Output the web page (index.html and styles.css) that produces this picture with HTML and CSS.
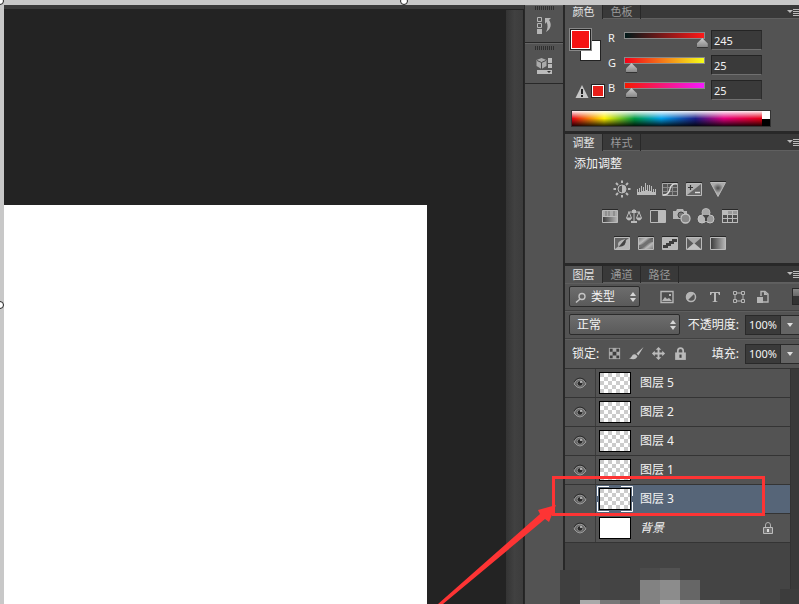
FILE: index.html
```html
<!DOCTYPE html>
<html lang="zh-CN">
<head>
<meta charset="utf-8">
<title>图层</title>
<link rel="stylesheet" href="styles.css">
</head>
<body>
<svg class="defs" aria-hidden="true">
  <defs>
    <linearGradient id="fade" x1="0" x2="1" y1="0" y2="0"><stop offset="0" stop-color="#3a3a3a"/><stop offset="1" stop-color="#b8b8b8"/></linearGradient>
    <linearGradient id="diag" x1="0" x2="1" y1="0" y2="1"><stop offset="0" stop-color="#777"/><stop offset=".3" stop-color="#bbb"/><stop offset=".5" stop-color="#555"/><stop offset=".7" stop-color="#bbb"/><stop offset="1" stop-color="#777"/></linearGradient>
    <radialGradient id="vibe" cx=".5" cy=".4" r=".5"><stop offset="0" stop-color="#4c4c4c"/><stop offset=".7" stop-color="#aaa"/></radialGradient>
    <symbol id="eye" viewBox="0 0 14 12"><path d="M1 7Q3 2 7 2t6 5Q10 11 7 11T1 7z" fill="#666" stroke="#999"/><path d="M1 5Q3 1 7 1t6 4" fill="none" stroke="#2c2c2c"/><circle cx="7" cy="6.500" r="2.800" fill="#292929" stroke="#858585"/><circle cx="8" cy="5" r="1" fill="#ccc"/></symbol>
    <symbol id="updown" viewBox="0 0 6 10"><path d="M0 4L3 0l3 4zM0 6h6l-3 4z" fill="#d6d6d6"/></symbol>
    <symbol id="down" viewBox="0 0 6 4"><path d="M0 0h6L3 4z" fill="#ddd"/></symbol>
    <symbol id="menu" viewBox="0 0 13 9"><path d="M1 2h6L4 5z" fill="#bbb"/><path d="M7 1.500h6M7 3.500h6M7 5.500h6M7 7.500h6" stroke="#bbb"/></symbol>
    <symbol id="lock" viewBox="0 0 12 14"><path d="M3.500 7V4.500a2.500 2.500 0 0 1 5 0V7" fill="none" stroke="#b9b9b9" stroke-width="1.6"/><path d="M1 6h10v7H1z" fill="#b9b9b9"/><path d="M5 8h2v3H5z" fill="#444"/></symbol>
    <symbol id="lock-outline" viewBox="0 0 12 14"><path d="M3.500 6V4a2.500 2.500 0 0 1 5 0v2" fill="none" stroke="#b0b0b0"/><path d="M1.500 6.500h9v6h-9z" fill="#707070" stroke="#bcbcbc"/><path d="M5 8h2v3H5z" fill="#ddd"/></symbol>
  </defs>
</svg>

<main class="app">
  <section class="workspace" aria-label="画布">
    <div class="canvas"><div class="paper"></div></div>
    <div class="scrollbar"></div>
  </section>

  <nav class="dock" aria-label="面板图标">
    <div class="dock-group">
      <span class="grip"></span>
      <button aria-label="历史记录"><svg width="16" height="20" viewBox="0 0 16 20"><path d="M1.500 1.500h4v4h-4zM1.500 7.500h4v4h-4z" fill="none" stroke="#b5b5b5"/><path d="M1 13h5v5H1z" fill="#b5b5b5"/><path d="M9 2h6l-2 2c3 4 2 9-3 12 2-4 2-7 .5-10L9 8z" fill="#b5b5b5"/></svg></button>
    </div>
    <div class="dock-group">
      <span class="grip"></span>
      <button aria-label="属性"><svg width="16" height="20" viewBox="0 0 16 20"><path d="M5.500 2l5 2v6l-5 3-5-3V4z" fill="#aaa"/><path d="M1 4.500l4.500 2 4.500-2M5.500 6.500V13" fill="none" stroke="#4a4a4a"/><path d="M12 2h4v5h-4zM12 8h4v4h-4zM1 14h15v4H1z" fill="#bbb"/><path d="M11 15h4l-2 2z" fill="#333"/></svg></button>
    </div>
  </nav>

  <aside class="panels">
    <section class="panel color-panel">
      <div class="tabs tabs-cut" role="tablist">
        <button class="tab active" role="tab">颜色</button><button class="tab" role="tab">色板</button>
        <button class="panel-menu" aria-label="颜色面板菜单"><svg width="13" height="9"><use href="#menu"/></svg></button>
      </div>
      <div class="color-body">
        <div class="swatches">
          <div class="pair"><span class="swatch back"></span><span class="swatch front"></span></div>
          <div class="gamut"><svg width="14" height="13" viewBox="0 0 14 13"><path d="M7 0l6.500 13H.5z" fill="#c6c6c6"/><path d="M6 4h2v5H6zM6 10h2v2H6z" fill="#222"/></svg><span class="gamut-chip"></span></div>
        </div>
        <div class="channels">
          <div class="channel"><label for="r">R</label><input class="slider red" type="range" min="0" max="255" value="245" aria-label="R 滑块"><input class="number" id="r" type="text" value="245"></div>
          <div class="channel"><label for="g">G</label><input class="slider green" type="range" min="0" max="255" value="25" aria-label="G 滑块"><input class="number" id="g" type="text" value="25"></div>
          <div class="channel"><label for="b">B</label><input class="slider blue" type="range" min="0" max="255" value="25" aria-label="B 滑块"><input class="number" id="b" type="text" value="25"></div>
        </div>
      </div>
      <div class="spectrum"><span class="hues"></span><span class="mono"></span></div>
    </section>

    <section class="panel adjust-panel">
      <div class="tabs" role="tablist">
        <button class="tab active" role="tab">调整</button><button class="tab" role="tab">样式</button>
        <button class="panel-menu" aria-label="调整面板菜单"><svg width="13" height="9"><use href="#menu"/></svg></button>
      </div>
      <h2>添加调整</h2>
      <div class="tools">
        <div class="tool-row">
          <button aria-label="亮度/对比度"><svg viewBox="0 0 16 16"><circle cx="8" cy="8" r="4" fill="#555" stroke="#bbb"/><path d="M8 4a4 4 0 0 1 0 8z" fill="#bbb"/><path d="M8-.5V2M8 14v2.500M-.5 8H2M14 8h2.500M2 2l2 2M12 12l2 2M14 2l-2 2M2 14l2-2" stroke="#bbb" stroke-width="2"/></svg></button>
          <button aria-label="色阶"><svg viewBox="0 0 16 16"><path d="M-1 14V8h1v3h1V7h1v4h1V5h1v5h1V6h1v4h1V2h1v7h1V4h1v6h1V4h1v6h1V5h1v6h1V8h1v3h1V8h1v6z" fill="#bbb"/></svg></button>
          <button aria-label="曲线"><svg viewBox="0 0 16 16"><path d="M.5 2.500h15v12H.5z" fill="#555" stroke="#aaa"/><path d="M5.500 3v11M10.500 3v11M1 6.500h14M1 10.500h14" stroke="#898989"/><path d="M1 14q6 0 7-6t7-5" fill="none" stroke="#ddd" stroke-width="1.4"/><path d="M0 1.500h16" stroke="#292929"/></svg></button>
          <button aria-label="曝光度"><svg viewBox="0 0 16 16"><path d="M.5 2.500h15v12H.5z" fill="#666" stroke="#bbb"/><path d="M1 3h14L1 14z" fill="#b0b0b0"/><path d="M2 6.500h5M4.500 4v5" stroke="#333" stroke-width="1.2"/><path d="M9 11.500h5" stroke="#ddd" stroke-width="1.4"/><path d="M0 1.500h16" stroke="#262626"/></svg></button>
          <button aria-label="自然饱和度"><svg viewBox="0 0 16 16"><path d="M.5 1.500h15L8 15.500z" fill="url(#vibe)" stroke="#bbb"/><path d="M0 .5h16" stroke="#292929"/></svg></button>
        </div>
        <div class="tool-row">
          <button aria-label="色相/饱和度"><svg viewBox="0 0 16 16"><path d="M.5 2.500h15v12H.5z" fill="url(#fade)" stroke="#bbb"/><path d="M1 3h14v5H1z" fill="#aaa"/><path d="M4 3v5M7 3v5M12 3v5" stroke="#777" stroke-width="1"/><path d="M0 8.500h16" stroke="#bbb"/><path d="M0 1.500h16" stroke="#292929"/></svg></button>
          <button aria-label="色彩平衡"><svg viewBox="0 0 16 16"><path d="M8 1v13M2 4h12M3 4L.5 10h5L3 4zM13 4l-2.500 6h5L13 4z" fill="none" stroke="#bbb"/><path d="M0 10h6q-3 5-6 0zM10 10h6q-3 5-6 0zM5 13h6v2H5zM6 2h4v3H6z" fill="#bbb"/></svg></button>
          <button aria-label="黑白"><svg viewBox="0 0 16 16"><path d="M.5 2.500h15v12H.5z" fill="#515151" stroke="#bbb"/><path d="M8 3h7v11H8z" fill="#bbb"/><path d="M0 1.500h16" stroke="#292929"/></svg></button>
          <button aria-label="照片滤镜"><svg viewBox="0 0 16 16"><path d="M-1 3h3l1-2h6l1 2h3v8H-1z" fill="#b5b5b5"/><circle cx="7" cy="7" r="3" fill="#777" stroke="#444"/><circle cx="11.500" cy="10.500" r="4.500" fill="#888" stroke="#c4c4c4" stroke-width="1.300"/></svg></button>
          <button aria-label="通道混合器"><svg viewBox="0 0 16 16"><circle cx="8" cy="4.500" r="4" fill="#a6a6a6" stroke="#b8b8b8"/><circle cx="4" cy="11" r="4" fill="#b6b6b6" stroke="#c4c4c4"/><circle cx="12" cy="11" r="4" fill="#999" stroke="#c4c4c4"/><path d="M4.500 7h7L9 10v3H7v-3z" fill="#444"/></svg></button>
          <button aria-label="颜色查找"><svg viewBox="0 0 16 16"><path d="M0 2h16v13H0z" fill="#bbb"/><path d="M6 3h4v3H6zM11 3h4v3h-4z" fill="#999"/><path d="M1 7h4v3H1zM6 7h4v3H6zM11 7h4v3h-4zM1 11h4v3H1zM6 11h4v3H6zM11 11h4v3h-4z" fill="#4e4e4e"/><path d="M0 1.500h16" stroke="#292929"/></svg></button>
        </div>
        <div class="tool-row">
          <button aria-label="反相"><svg viewBox="0 0 16 16"><path d="M.5 2.500h15v12H.5z" fill="#666" stroke="#bbb"/><path d="M1 14L15 3v11z" fill="#b5b5b5"/><path d="M4.500 12q-3-6 7-8z" fill="#b5b5b5"/><path d="M4.500 12L11.500 4q2 7-7 8z" fill="#444"/><path d="M0 1.500h16" stroke="#292929"/></svg></button>
          <button aria-label="色调分离"><svg viewBox="0 0 16 16"><path d="M.5 2.500h15v12H.5z" fill="url(#diag)" stroke="#bbb"/><path d="M1 10q5 0 8-4 3-2 6-2v3q-5 0-8 4-3 2-6 2z" fill="#707070"/><path d="M0 1.500h16" stroke="#292929"/></svg></button>
          <button aria-label="阈值"><svg viewBox="0 0 16 16"><path d="M.5 2.500h15v12H.5z" fill="#b8b8b8" stroke="#bbb"/><path d="M1 10h3V8h3V6h3V4h5v3h-3v2H9v2H6v2H1z" fill="#3d3d3d"/><path d="M0 1.500h16" stroke="#292929"/></svg></button>
          <button aria-label="可选颜色"><svg viewBox="0 0 16 16"><path d="M.5 2.500h15v12H.5z" fill="#5b5b5b" stroke="#bbb"/><path d="M1 3h14L8 9z" fill="#aaa"/><path d="M1 14h14L8 8z" fill="#c1c1c1"/><path d="M0 1.500h16" stroke="#292929"/></svg></button>
          <button aria-label="渐变映射"><svg viewBox="0 0 16 16"><path d="M.5 2.500h15v12H.5z" fill="url(#fade)" stroke="#bbb"/><path d="M0 1.500h16" stroke="#292929"/></svg></button>
        </div>
      </div>
    </section>

    <section class="panel layers-panel">
      <div class="tabs" role="tablist">
        <button class="tab active" role="tab">图层</button><button class="tab" role="tab">通道</button><button class="tab" role="tab">路径</button>
        <button class="panel-menu" aria-label="图层面板菜单"><svg width="13" height="9"><use href="#menu"/></svg></button>
      </div>
      <div class="bar">
        <div class="dropdown filter">
          <select aria-label="图层过滤"><option>类型</option></select>
          <svg class="search" width="12" height="12" viewBox="0 0 12 12"><circle cx="7" cy="4.500" r="3" fill="none" stroke="#c4c4c4" stroke-width="1.400"/><path d="M5 7l-4 3.500" stroke="#c4c4c4" stroke-width="1.500"/></svg>
          <svg class="arrows" width="6" height="10"><use href="#updown"/></svg>
        </div>
        <div class="filters">
          <button aria-label="像素图层"><svg viewBox="0 0 16 16"><path d="M2 2.500h12v11H2z" fill="#4c4c4c" stroke="#b5b5b5" stroke-width="1.400"/><path d="M3 12l3-4 2 2 2-1 3 3z" fill="#b5b5b5"/><path d="M10 5h2v2h-2z" fill="#b5b5b5"/></svg></button>
          <button aria-label="调整图层"><svg viewBox="0 0 16 16"><circle cx="8" cy="8" r="4.500" fill="#555" stroke="#b5b5b5" stroke-width="1.500"/><path d="M11.500 4.500l-7 7A5 5 0 0 1 4.500 4.500a5 5 0 0 1 7 0z" fill="#b5b5b5"/></svg></button>
          <button aria-label="文字图层"><svg viewBox="0 0 16 16"><path d="M3 3h10v3h-1l-1-2H9v8l2 1H5l2-1V4H5L4 6H3z" fill="#bbb"/></svg></button>
          <button aria-label="形状图层"><svg viewBox="0 0 16 16"><path d="M4 4h8v8H4z" fill="none" stroke="#b5b5b5"/><path d="M2.500 2.500h3v3h-3zM10.500 2.500h3v3h-3zM2.500 10.500h3v3h-3zM10.500 10.500h3v3h-3z" fill="#555" stroke="#b5b5b5"/></svg></button>
          <button aria-label="智能对象"><svg viewBox="0 0 16 16"><path d="M6 7V2.500h4L13 5v8H8" fill="none" stroke="#b5b5b5" stroke-width="1.400"/><path d="M9 2v4h4M2 8h6v6H2z" fill="#b5b5b5"/></svg></button>
        </div>
        <button class="toggle" aria-label="打开或关闭图层过滤"></button>
      </div>
      <div class="bar">
        <div class="dropdown blend">
          <select aria-label="混合模式"><option>正常</option></select>
          <svg class="arrows" width="6" height="10"><use href="#updown"/></svg>
        </div>
        <label class="amount-label" for="opacity">不透明度:</label>
        <input class="amount" id="opacity" type="text" value="100%"><button class="amount-more" aria-label="不透明度滑块"><svg width="6" height="4"><use href="#down"/></svg></button>
      </div>
      <div class="bar bar-last">
        <span class="lock-label">锁定:</span>
        <div class="locks">
          <button aria-label="锁定透明像素"><svg viewBox="0 0 16 16"><path d="M2 2h12v12H2z" fill="#aaa"/><path d="M3 3h3v3H3zM10 3h3v3h-3zM6 6h4v4H6zM3 10h3v3H3zM10 10h3v3h-3z" fill="#3e3e3e"/></svg></button>
          <button aria-label="锁定图像像素"><svg viewBox="0 0 16 16"><path d="M15.500 1L8 8l2 2zM7 9q-3-1-4 2-1 2-3 2 7 3 9-2z" fill="#c0c0c0"/></svg></button>
          <button aria-label="锁定位置"><svg viewBox="0 0 16 16"><path d="M8 1l3 3H9v3h3V5l3 3-3 3V9H9v3h2l-3 3-3-3h2V9H4v2L1 8l3-3v2h3V4H5z" fill="#bbb"/></svg></button>
          <button aria-label="锁定全部"><svg viewBox="0 0 12 14"><use href="#lock"/></svg></button>
        </div>
        <label class="amount-label" for="fill">填充:</label>
        <input class="amount" id="fill" type="text" value="100%"><button class="amount-more" aria-label="填充滑块"><svg width="6" height="4"><use href="#down"/></svg></button>
      </div>
      <div class="layer-area">
        <ul class="layers">
          <li class="layer"><button class="eye" aria-label="显示图层 5"><svg width="14" height="12"><use href="#eye"/></svg></button><div class="info"><span class="thumb checks"></span><span class="name">图层 5</span></div></li>
          <li class="layer"><button class="eye" aria-label="显示图层 2"><svg width="14" height="12"><use href="#eye"/></svg></button><div class="info"><span class="thumb checks"></span><span class="name">图层 2</span></div></li>
          <li class="layer"><button class="eye" aria-label="显示图层 4"><svg width="14" height="12"><use href="#eye"/></svg></button><div class="info"><span class="thumb checks"></span><span class="name">图层 4</span></div></li>
          <li class="layer"><button class="eye" aria-label="显示图层 1"><svg width="14" height="12"><use href="#eye"/></svg></button><div class="info"><span class="thumb checks"></span><span class="name">图层 1</span></div></li>
          <li class="layer selected"><button class="eye" aria-label="显示图层 3"><svg width="14" height="12"><use href="#eye"/></svg></button><div class="info"><span class="thumb checks"><svg class="corners" width="36" height="26" viewBox="0 0 36 26"><path d="M.5 10V.5H12M24 .5h11.500V10M35.500 16v9.500H24M12 25.500H.5V16" fill="none" stroke="#fff"/></svg></span><span class="name">图层 3</span></div></li>
          <li class="layer"><button class="eye" aria-label="显示背景"><svg width="14" height="12"><use href="#eye"/></svg></button><div class="info"><span class="thumb"></span><em class="name">背景</em><svg class="layer-lock" width="12" height="14"><use href="#lock-outline"/></svg></div></li>
        </ul>
        <div class="layer-scroll"></div>
      </div>
    </section>
  </aside>

  <svg class="mosaic" width="239" height="36" viewBox="0 0 239 36" shape-rendering="crispEdges" aria-hidden="true">
    <path d="M0 2h20v34H0z" fill="#3f3f3f"/><path d="M20 12h20v20H20z" fill="#484848"/><path d="M20 32h20v4H20z" fill="#a9a9a9"/><path d="M40 32h20v4H40z" fill="#777"/><path d="M60 32h20v4H60z" fill="#656565"/>
    <path d="M80 0h20v12H80z" fill="#4b4b4b"/><path d="M80 12h20v24H80z" fill="#828282"/><path d="M100 0h20v12h-20z" fill="#525252"/><path d="M100 12h20v20h-20z" fill="#8c8c8c"/><path d="M100 32h20v4h-20z" fill="#b0b0b0"/>
    <path d="M120 12h20v20h-20z" fill="#666"/><path d="M120 32h40v4h-40z" fill="#9b9b9b"/><path d="M160 32h20v4h-20z" fill="#828282"/><path d="M180 32h20v4h-20z" fill="#646464"/><path d="M220 21h19v15h-19z" fill="#3c3c3c"/>
  </svg>
  <svg class="callout" width="365" height="134" viewBox="0 0 365 134" aria-hidden="true">
    <path d="M119.500 7.500h210v37h-210z" fill="none" stroke="#fd3434" stroke-width="3"/>
    <path d="M4 134L106 44l-2-4 18-5-7 17-4-3L9 134z" fill="#fd3434"/>
  </svg>
</main>
<span class="handle handle-corner"></span><span class="handle handle-top"></span><span class="handle handle-left"></span>
</body>
</html>
```
FILE: styles.css
```css
* { box-sizing: border-box; }
html, body { height: 100%; }
body {
  margin: 0;
  padding: 5px 0 0 4px;
  background: #c8c8c8;
  color: #f2f2f2;
  font: 12px/16px "Noto Sans", "Noto Sans CJK SC", sans-serif;
  overflow: hidden;
}
button, input, select { margin: 0; padding: 0; border: 0; border-radius: 0; font: inherit; color: inherit; }
button { display: flex; align-items: center; justify-content: center; background: none; }
.defs { position: absolute; width: 0; height: 0; }

.app { position: relative; display: flex; height: 100%; overflow: hidden; background: #282828; }

/* Canvas */
.workspace { flex: 1; display: flex; min-width: 0; border-top: 4px solid #3a3a3a; background: #232323; }
.canvas { flex: 1; padding: 196px 79px 0 0; }
.paper { height: 100%; background: #fff; }
.scrollbar { width: 17px; margin: 1px 1px 0 0; background: linear-gradient(90deg, #343434, #414141 50%, #3c3c3c); }

/* Collapsed panel icons */
.dock { width: 38px; margin: 0 2px 0 1px; background: #535353; }
.dock-group { display: flex; flex-direction: column; align-items: center; height: 41px; padding-top: 3px; border-bottom: 1px solid #282828; box-shadow: inset 0 1px #656565; }
.dock-group:first-child { height: 38px; padding-top: 1px; }
.dock-group button { height: 24px; margin-top: 4px; }
.grip { width: 19px; height: 4px; background: repeating-linear-gradient(90deg, #2f2f2f 0 1px, #535353 1px 2px); }

/* Panels */
.panels { display: flex; flex-direction: column; width: 234px; }
.panel { background: #535353; }
.color-panel { height: 126px; margin-bottom: 3px; }
.adjust-panel { height: 129px; margin-bottom: 3px; }
.layers-panel { flex: 1; display: flex; flex-direction: column; min-height: 0; }

.tabs { display: flex; flex: none; height: 17px; background: #393939; box-shadow: inset 0 -1px #606060; }
.tabs-cut { height: 14px; }
.tab { width: 38px; border-right: 1px solid #282828; font-size: 11px; line-height: 14px; color: #999; box-shadow: inset 0 -1px #606060; }
.tab.active { background: #535353; color: #e4e4e4; box-shadow: none; }
.panel-menu { margin-left: auto; }

.color-body { display: grid; grid-template-columns: 43px 1fr; padding-top: 8px; }
.swatches { padding: 1px 0 0 5px; }
.pair { position: relative; height: 56px; }
.swatch { position: absolute; width: 21px; height: 21px; border: 1px solid #222; }
.swatch.back { left: 10px; top: 12px; background: #fff; }
.swatch.front { left: 0; top: 1px; background: #f51414; box-shadow: inset 0 0 0 1px #fff, 0 0 0 1px #888; }
.gamut { display: flex; align-items: center; gap: 2px; padding-left: 5px; }
.gamut-chip { width: 14px; height: 14px; border: 1px solid #222; background: #e71f19; box-shadow: inset 0 0 0 1px #fff; }
.channel { display: flex; align-items: flex-start; height: 25px; padding-top: 3px; }
.channel label { width: 10px; font-size: 11px; }
.slider {
  appearance: none;
  width: 93px;
  height: 18px;
  background: linear-gradient(90deg, var(--from), var(--to)) 7px 3px / 79px 5px no-repeat, linear-gradient(#888, #888) 6px 2px / 81px 7px no-repeat;
}
.red { --from: #001919; --to: #ff1919; }
.green { --from: #f50019; --to: #f5ff19; }
.blue { --from: #f51900; --to: #f519ff; }
.slider::-webkit-slider-runnable-track { height: 18px; }
.slider::-webkit-slider-thumb {
  appearance: none;
  width: 11px;
  height: 10px;
  margin-top: 8px;
  background: linear-gradient(#ccc, #888);
  border-bottom: 1px solid #333;
  clip-path: polygon(50% 0, 100% 55%, 100% 100%, 0 100%, 0 55%);
}
.number { width: 51px; height: 20px; padding-left: 2px; background: #3a3a3a; border: 1px solid; border-color: #242424 #2c2c2c #707070 #242424; font-size: 11px; }
.spectrum { display: flex; width: 200px; height: 17px; margin: 8px 0 0 6px; border: 1px solid #333; }
.hues {
  flex: 1;
  background: linear-gradient(rgba(255,255,255,.95), rgba(255,255,255,0) 50%, rgba(0,0,0,0) 50%, rgba(0,0,0,.85)),
    linear-gradient(90deg, #e60012, #fff100 17%, #009944 33%, #00a0e9 47%, #1d2088 65%, #e4007f 80%, #e60012);
}
.mono { width: 8px; background: linear-gradient(#fff 50%, #000 50%); }

.adjust-panel h2 { margin: 4px 0 8px 9px; font-size: 12px; font-weight: 400; line-height: 18px; }
.tools { width: 210px; display: grid; gap: 11px; }
.tool-row { display: flex; justify-content: center; gap: 8px; }
.tool-row button, .tool-row svg { width: 16px; height: 16px; }
.tool-row svg { overflow: visible; }

/* Layer options */
.bar { display: flex; flex: none; align-items: center; height: 28px; padding-left: 4px; border-bottom: 1px solid #404040; box-shadow: inset 0 1px #5e5e5e; }
.bar-last { height: 30px; border-bottom-color: #333; }
.dropdown { position: relative; }
.dropdown select {
  appearance: none;
  display: block;
  width: 100%;
  height: 21px;
  padding-left: 7px;
  border: 1px solid #2b2b2b;
  border-radius: 2px;
  background: linear-gradient(#6d6d6d, #5a5a5a);
  line-height: 19px;
}
.filter { width: 71px; }
.filter select { padding-left: 21px; }
.blend { width: 111px; }
.search, .arrows { position: absolute; top: 6px; pointer-events: none; }
.search { left: 6px; }
.arrows { right: 4px; }
.filters { display: flex; gap: 8px; margin-left: 19px; }
.filters button, .filters svg { width: 16px; height: 16px; }
.toggle { width: 7px; height: 17px; margin-left: auto; border: 1px solid #282828; border-right: 0; background: linear-gradient(#888, #666 50%, #333 50%); }
.amount-label { margin-left: auto; padding-right: 6px; white-space: nowrap; }
.amount { width: 36px; height: 20px; border: 1px solid #292929; background: #3a3a3a; font-size: 11px; text-align: center; }
.amount-more { width: 18px; height: 20px; border: 1px solid #292929; border-width: 1px 0; background: #646464; }
.lock-label { width: 38px; padding-left: 3px; white-space: nowrap; }
.locks { display: flex; gap: 7px; }
.locks button, .locks svg { width: 15px; height: 15px; }

/* Layer list */
.layer-area { flex: 1; display: flex; min-height: 0; background: #444; }
.layers { flex: 1; margin: 0; padding: 0; list-style: none; }
.layer { display: flex; height: 29px; border-bottom: 1px solid #343434; background: #535353; }
.eye { width: 31px; border-right: 1px solid #3b3b3b; }
.info { flex: 1; display: flex; align-items: center; padding: 0 16px 0 3px; }
.selected .info { background: #566578; }
.thumb { position: relative; width: 32px; height: 22px; border: 1px solid #000; background: #fff; }
.checks { background: repeating-conic-gradient(#fff 0 25%, #ccc 0 50%) 0 0 / 8px 8px; }
.corners { position: absolute; left: -3px; top: -3px; }
.name { margin-left: 9px; }
.layer-lock { margin-left: auto; }
.layer-scroll { width: 9px; background: #3a3a3a; border-left: 1px solid #333; }

/* Overlays */
.mosaic { position: absolute; right: 0; bottom: 0; }
.callout { position: absolute; right: 0; top: 465px; }
.handle { position: absolute; width: 8px; height: 8px; border: 1px solid #222; border-radius: 50%; background: #fff; }
.handle-corner { left: -4px; top: -3px; }
.handle-top { left: 400px; top: -3px; }
.handle-left { left: -4px; top: 301px; }
```
